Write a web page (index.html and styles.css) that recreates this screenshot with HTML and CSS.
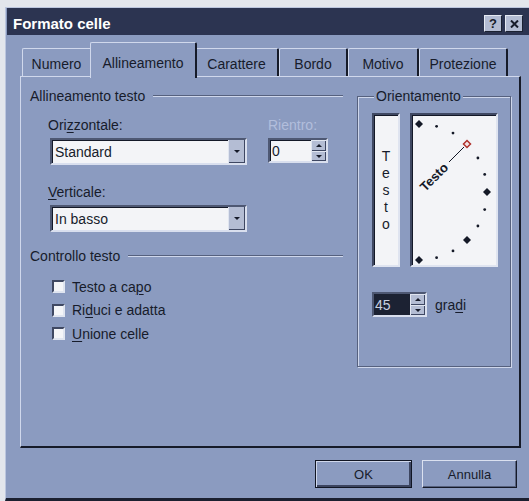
FILE: index.html
```html
<!DOCTYPE html>
<html lang="it">
<head>
<meta charset="utf-8">
<title>Formato celle</title>
<link rel="stylesheet" href="styles.css">
</head>
<body>
<div class="dialog">
  <div class="titlebar">
    <span class="title">Formato celle</span>
    <div class="cap-buttons">
      <span class="cap-btn">?</span>
      <span class="cap-btn">
        <svg width="9" height="8" viewBox="0 0 9 8"><path d="M1 0.5 L8 7.5 M8 0.5 L1 7.5" stroke="#171c2b" stroke-width="2"/></svg>
      </span>
    </div>
  </div>

  <div class="tabs">
    <div class="tab t-numero">Numero</div>
    <div class="tab active t-allin">Allineamento</div>
    <div class="tab t-carattere">Carattere</div>
    <div class="tab t-bordo">Bordo</div>
    <div class="tab t-motivo">Motivo</div>
    <div class="tab t-protezione">Protezione</div>
  </div>

  <div class="panel">
    <div class="left">
      <div class="head"><span>Allineamento testo</span><span class="rule"></span></div>

      <div class="fields">
        <div class="lbl">Ori<u>z</u>zontale:</div>
        <div class="lbl disabled">Rientro:</div>
        <div class="select"><span class="value">Standard</span><span class="drop"><i class="arrow-down"></i></span></div>
        <div class="spin"><span class="value">0</span><span class="arrows"><span class="half"><i class="arrow-up"></i></span><span class="half"><i class="arrow-down"></i></span></span></div>
        <div class="lbl lbl-gap"><u>V</u>erticale:</div>
        <div></div>
        <div class="select"><span class="value">In basso</span><span class="drop"><i class="arrow-down"></i></span></div>
      </div>

      <div class="head head-second"><span>Controllo testo</span><span class="rule"></span></div>

      <div class="checks">
        <div class="check"><span class="box"></span><span>Testo a ca<u>p</u>o</span></div>
        <div class="check"><span class="box"></span><span>Ri<u>d</u>uci e adatta</span></div>
        <div class="check"><span class="box"></span><span><u>U</u>nione celle</span></div>
      </div>
    </div>

    <fieldset class="group">
      <legend>Orientamento</legend>
      <div class="orient">
        <div class="vbox"><span>T</span><span>e</span><span>s</span><span>t</span><span>o</span></div>
        <div class="dial">
          <svg width="84" height="150" viewBox="0 0 84 150">
            <g fill="#141927">
              <polygon points="7,5 11,9 7,13 3,9"/>
              <polygon points="75,73 79,77 75,81 71,77"/>
              <polygon points="55,121 59,125 55,129 51,125"/>
              <polygon points="7,141 11,145 7,149 3,145"/>
              <circle cx="24.6" cy="11.3" r="1.4"/>
              <circle cx="41" cy="18.1" r="1.4"/>
              <circle cx="65.9" cy="43" r="1.4"/>
              <circle cx="72.7" cy="59.4" r="1.4"/>
              <circle cx="72.7" cy="94.6" r="1.4"/>
              <circle cx="65.9" cy="111" r="1.4"/>
              <circle cx="41" cy="135.9" r="1.4"/>
              <circle cx="24.6" cy="142.7" r="1.4"/>
            </g>
            <line x1="37" y1="47" x2="52" y2="32" stroke="#141927" stroke-width="1"/>
            <polygon points="55,25.5 58.5,29 55,32.5 51.5,29" fill="#f1e2e4" stroke="#b0322c" stroke-width="1.5"/>
            <text class="dial-text" x="10" y="74" transform="rotate(-45 10 74)" dominant-baseline="central">Testo</text>
          </svg>
        </div>
      </div>
      <div class="deg">
        <div class="spin spin-dark"><span class="value">45</span><span class="arrows"><span class="half"><i class="arrow-up"></i></span><span class="half"><i class="arrow-down"></i></span></span></div>
        <span>gra<u>d</u>i</span>
      </div>
    </fieldset>
  </div>

  <div class="actions">
    <button class="btn btn-default">OK</button>
    <button class="btn">Annulla</button>
  </div>
</div>
</body>
</html>
```
FILE: styles.css
```css
html, body {
  margin: 0;
  padding: 0;
  overflow: hidden;
}

body {
  background: #e3e6ec;
  font-family: "Liberation Sans", Arial, sans-serif;
  font-size: 14px;
  color: #171c2b;
}

u { text-decoration-thickness: 1px; text-underline-offset: 2px; }

/* window frame */
.dialog {
  box-sizing: border-box;
  width: 526px;
  height: 494px;
  margin: 7px 0 0 5px;
  background: #8b9bc0;
  border-top: 1px solid #bcc6de;
  border-left: 1px solid #bcc6de;
  border-bottom: 3px solid #1b2030;
}

.titlebar {
  box-sizing: border-box;
  height: 27px;
  margin: 0 1px;
  padding: 4px 7px 0 6px;
  background: #2c3451;
  display: flex;
  align-items: center;
}

.title {
  color: #fff;
  font-weight: bold;
  font-size: 15px;
}

.cap-buttons {
  margin-left: auto;
  display: flex;
  gap: 3px;
}

.cap-btn {
  box-sizing: border-box;
  width: 18px;
  height: 17px;
  background: #b3bcd3;
  border: 1px solid;
  border-color: #e6eaf3 #1c2232 #1c2232 #e6eaf3;
  display: flex;
  align-items: center;
  justify-content: center;
  font-weight: bold;
  font-size: 13px;
  color: #171c2b;
}

/* tab strip */
.tabs {
  display: flex;
  align-items: flex-end;
  height: 41px;
  padding-left: 16px;
}

.tab {
  box-sizing: border-box;
  height: 28px;
  padding-top: 2px;
  display: flex;
  align-items: center;
  justify-content: center;
  background: #8b9bc0;
  border-top: 1px solid #d0d8ec;
  border-left: 1px solid #d0d8ec;
  border-right: 2px solid #161b29;
  border-radius: 2px 2px 0 0;
}

.tab.active {
  height: 36px;
  padding-top: 4px;
  margin: 0 -2px -2px;
  position: relative;
  z-index: 1;
}

.t-numero { width: 70px; }
.t-allin { width: 107px; }
.t-carattere { width: 84px; }
.t-bordo { width: 69px; }
.t-motivo { width: 71px; }
.t-protezione { width: 89px; }

/* tab page */
.panel {
  box-sizing: border-box;
  margin-left: 14px;
  width: 501px;
  height: 372px;
  border-top: 1px solid #d0d8ec;
  border-left: 1px solid #d0d8ec;
  border-right: 2px solid #161b29;
  border-bottom: 2px solid #161b29;
  display: grid;
  grid-template-columns: 322px 154px;
  column-gap: 14px;
  align-items: start;
}

.left { padding-top: 11px; }

.head {
  display: flex;
  align-items: center;
  height: 16px;
  line-height: 16px;
  padding-left: 9px;
}

.head .rule {
  flex: 1;
  margin-left: 8px;
  border-top: 1px solid #56617e;
  border-bottom: 1px solid #cfd7eb;
}

.head-second { margin-top: 16px; }

.fields {
  margin-top: 13px;
  padding-left: 27px;
  display: grid;
  grid-template-columns: 200px 60px;
  column-gap: 20px;
  align-items: start;
}

.lbl {
  line-height: 16px;
  margin-bottom: 5px;
}

.lbl-gap { margin-top: 19px; }

.disabled { color: #b2bedc; }

/* sunken fields */
.select, .spin {
  box-sizing: border-box;
  display: flex;
  background: #f3f4f7;
  border: 2px solid;
  border-color: #4e5873 #d9dfee #d9dfee #4e5873;
  box-shadow: inset 1px 1px 0 #141928;
}

.select {
  margin-left: 2px;
  width: 197px;
  height: 27px;
}

.select .value {
  flex: 1;
  padding-left: 3px;
  display: flex;
  align-items: center;
}

.drop {
  width: 16px;
  background: #b4bdd4;
  border-left: 1px solid #e0e5f0;
  box-shadow: inset -1px -1px 0 #3e4762;
  display: flex;
  align-items: center;
  justify-content: center;
}

.arrow-down, .arrow-up {
  display: block;
  width: 0;
  height: 0;
  border-left: 3px solid transparent;
  border-right: 3px solid transparent;
}
.arrow-down { border-top: 3px solid #161b29; }
.arrow-up { border-bottom: 3px solid #161b29; }

.spin {
  width: 60px;
  height: 25px;
}

.spin .value {
  flex: 1;
  padding-left: 2px;
  display: flex;
  align-items: center;
}

.arrows {
  width: 15px;
  display: flex;
  flex-direction: column;
}

.arrows .half {
  flex: 1;
  background: #b4bdd4;
  border-top: 1px solid #e0e5f0;
  border-left: 1px solid #e0e5f0;
  box-shadow: inset -1px -1px 0 #3e4762;
  display: flex;
  align-items: center;
  justify-content: center;
}

.spin-dark { width: 55px; }
.spin-dark .value {
  background: #1c2233;
  color: #c9d0e0;
  padding-left: 1px;
}

/* check boxes */
.checks {
  margin-top: 11px;
  padding-left: 31px;
}

.check {
  height: 23.5px;
  display: flex;
  align-items: center;
  gap: 7px;
}

.box {
  box-sizing: border-box;
  width: 13px;
  height: 13px;
  background: #f4f5f8;
  border: 2px solid;
  border-color: #3f4862 #e0e5f0 #e0e5f0 #3f4862;
}

/* orientation group */
.group {
  box-sizing: border-box;
  margin: 11px 0 0;
  width: 154px;
  height: 279px;
  min-width: 0;
  border: 1px solid #56617e;
  box-shadow: 1px 1px 0 #cfd7eb, inset 1px 1px 0 #cfd7eb;
  padding: 9px 0 0 14px;
}

.group legend {
  padding: 0 2px;
  margin-left: 2px;
  line-height: 16px;
  background: #8b9bc0;
}

.orient {
  display: flex;
  gap: 10px;
}

.vbox, .dial {
  box-sizing: border-box;
  height: 154px;
  background: #f3f4f7;
  border: 2px solid;
  border-color: #3f4862 #dfe4f0 #dfe4f0 #3f4862;
  box-shadow: inset 1px 1px 0 #141928;
}

.vbox {
  width: 28px;
  display: flex;
  flex-direction: column;
  align-items: center;
  justify-content: center;
  line-height: 17px;
}

.dial { width: 88px; }
.dial svg { display: block; }

.dial-text {
  font-family: "Liberation Sans", Arial, sans-serif;
  font-size: 13px;
  font-weight: bold;
  fill: #141927;
}

.deg {
  margin-top: 25px;
  display: flex;
  align-items: center;
  gap: 8px;
}

/* command buttons */
.actions {
  box-sizing: border-box;
  margin: 12px 0 0 14px;
  width: 501px;
  padding-right: 4px;
  display: flex;
  justify-content: flex-end;
  gap: 10px;
}

.btn {
  box-sizing: border-box;
  width: 95px;
  height: 28px;
  padding: 0;
  font-family: "Liberation Sans", Arial, sans-serif;
  font-size: 13px;
  color: #171c2b;
  background: #8b9bc0;
  border: 1px solid;
  border-color: #dbe1f0 #141928 #141928 #dbe1f0;
  box-shadow: inset -1px -1px 0 #56617e;
}

.btn-default {
  width: 97px;
  border: 1px solid #111624;
  box-shadow: inset 1px 1px 0 #d0d8ec, inset -2px -2px 0 #3c4560;
}
```
